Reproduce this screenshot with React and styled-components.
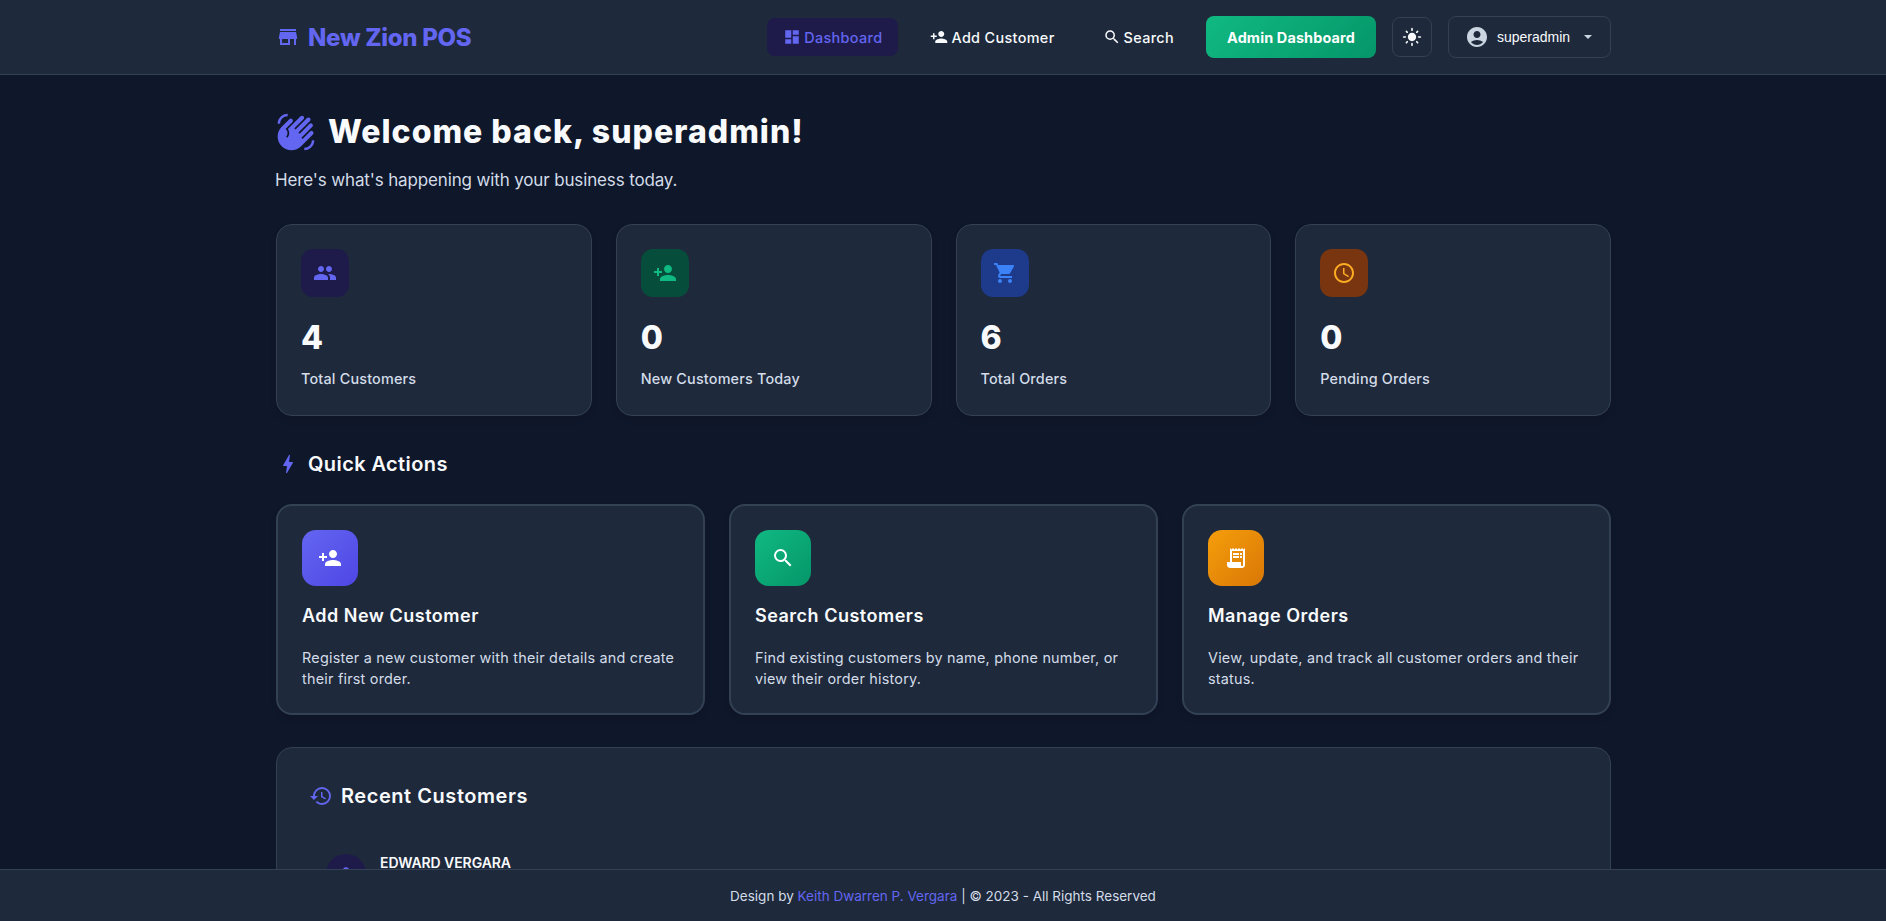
import styled, { createGlobalStyle } from "styled-components";
import {
  MdStore,
  MdDashboard,
  MdPersonAdd,
  MdSearch,
  MdLightMode,
  MdAccountCircle,
  MdWavingHand,
  MdPeople,
  MdShoppingCart,
  MdAccessTime,
  MdBolt,
  MdReceiptLong,
  MdHistory,
  MdPerson,
  MdChevronRight,
} from "react-icons/md";

const stats = [
  { icon: <MdPeople />, value: "4", label: "Total Customers", bg: "#1e1b4b", color: "#6366f1" },
  { icon: <MdPersonAdd />, value: "0", label: "New Customers Today", bg: "#064e3b", color: "#10b981" },
  { icon: <MdShoppingCart />, value: "6", label: "Total Orders", bg: "#1e3a8a", color: "#3b82f6" },
  { icon: <MdAccessTime />, value: "0", label: "Pending Orders", bg: "#78350f", color: "#fbab24" },
];

const actions = [
  {
    icon: <MdPersonAdd />,
    title: "Add New Customer",
    text: "Register a new customer with their details and create their first order.",
    from: "#6366f1",
    to: "#4f46e5",
  },
  {
    icon: <MdSearch />,
    title: "Search Customers",
    text: "Find existing customers by name, phone number, or view their order history.",
    from: "#10b981",
    to: "#059669",
  },
  {
    icon: <MdReceiptLong />,
    title: "Manage Orders",
    text: "View, update, and track all customer orders and their status.",
    from: "#f59e0b",
    to: "#d97706",
  },
];

const App = () => {
  return (
    <>
      <GlobalStyle />
      <Page>
        <Navbar>
          <NavInner>
            <Brand>
              <MdStore />
              New Zion POS
            </Brand>
            <NavLinks>
              <NavLink $active>
                <MdDashboard />
                Dashboard
              </NavLink>
              <NavLink>
                <MdPersonAdd />
                Add Customer
              </NavLink>
              <NavLink>
                <MdSearch />
                Search
              </NavLink>
              <AdminButton>Admin Dashboard</AdminButton>
              <ThemeButton>
                <MdLightMode />
              </ThemeButton>
              <UserButton>
                <MdAccountCircle />
                <span>superadmin</span>
                <Caret />
              </UserButton>
            </NavLinks>
          </NavInner>
        </Navbar>

        <Main>
          <Container>
            <Welcome>
              <MdWavingHand />
              Welcome back, superadmin!
            </Welcome>
            <Subtitle>Here's what's happening with your business today.</Subtitle>

            <StatsGrid>
              {stats.map((s) => (
                <StatCard key={s.label}>
                  <StatIcon $bg={s.bg} $color={s.color}>
                    {s.icon}
                  </StatIcon>
                  <StatValue>{s.value}</StatValue>
                  <StatLabel>{s.label}</StatLabel>
                </StatCard>
              ))}
            </StatsGrid>

            <SectionTitle>
              <MdBolt />
              Quick Actions
            </SectionTitle>
            <ActionsGrid>
              {actions.map((a) => (
                <ActionCard key={a.title}>
                  <ActionIcon $from={a.from} $to={a.to}>
                    {a.icon}
                  </ActionIcon>
                  <ActionTitle>{a.title}</ActionTitle>
                  <ActionText>{a.text}</ActionText>
                </ActionCard>
              ))}
            </ActionsGrid>

            <RecentCard>
              <RecentTitle>
                <MdHistory />
                Recent Customers
              </RecentTitle>
              <CustomerRow>
                <Avatar>
                  <MdPerson />
                </Avatar>
                <CustomerName>EDWARD VERGARA</CustomerName>
                <RowArrow>
                  <MdChevronRight />
                </RowArrow>
              </CustomerRow>
            </RecentCard>
          </Container>
        </Main>

        <Footer>
          Design by&nbsp;<FooterLink>Keith Dwarren P. Vergara</FooterLink>&nbsp;| © 2023 - All Rights Reserved
        </Footer>
      </Page>
    </>
  );
};

export default App;

const GlobalStyle = createGlobalStyle`
  * {
    box-sizing: border-box;
  }
  html, body {
    margin: 0;
    padding: 0;
    background: #0f172a;
  }
  body {
    font-family: Inter, "Noto Sans", "Liberation Sans", sans-serif;
    color: #f8fafc;
  }
`;

const Page = styled.div`
  display: flex;
  flex-direction: column;
  height: 100vh;
  overflow: hidden;
  background: #0f172a;
`;

const Navbar = styled.header`
  flex: none;
  height: 75px;
  background: #1e293b;
  border-bottom: 1px solid #334155;
`;

const NavInner = styled.div`
  display: flex;
  align-items: center;
  justify-content: space-between;
  max-width: 1400px;
  height: 100%;
  margin: 0 auto;
  padding: 0 32px 0 33px;
`;

const Brand = styled.div`
  display: flex;
  align-items: center;
  gap: 8px;
  font-size: 24px;
  font-weight: 800;
  letter-spacing: -0.3px;
  color: #6366f1;
  svg {
    width: 24px;
    height: 24px;
  }
`;

const NavLinks = styled.nav`
  display: flex;
  align-items: center;
  gap: 16px;
`;

const NavLink = styled.a`
  display: flex;
  align-items: center;
  gap: 3px;
  height: 38px;
  padding: 0 16px;
  border-radius: 8px;
  font-size: 14.4px;
  font-weight: 500;
  letter-spacing: 0.35px;
  color: ${(p) => (p.$active ? "#6366f1" : "#f8fafc")};
  background: ${(p) => (p.$active ? "#1e1b4b" : "transparent")};
  svg {
    width: 18px;
    height: 18px;
  }
`;

const AdminButton = styled.button`
  height: 42px;
  width: 170px;
  padding: 0;
  border: none;
  border-radius: 8px;
  background: linear-gradient(135deg, #10b981, #059669);
  color: #fff;
  font-family: inherit;
  font-size: 14.4px;
  font-weight: 700;
  letter-spacing: 0.15px;
`;

const ThemeButton = styled.button`
  display: flex;
  align-items: center;
  justify-content: center;
  width: 40px;
  height: 40px;
  padding: 0;
  border: 1px solid #334155;
  border-radius: 8px;
  background: transparent;
  color: #f8fafc;
  svg {
    width: 20px;
    height: 20px;
  }
`;

const UserButton = styled.button`
  display: flex;
  align-items: center;
  gap: 8px;
  width: 163px;
  height: 42px;
  padding: 0 16px;
  border: 1px solid #334155;
  border-radius: 8px;
  background: transparent;
  color: #f8fafc;
  font-family: "Liberation Sans", Arial, sans-serif;
  font-size: 14px;
  svg {
    width: 24px;
    height: 24px;
    color: #cbd5e1;
  }
`;

const Caret = styled.i`
  margin-left: 6px;
  border-top: 4px solid #cbd5e1;
  border-left: 4px solid transparent;
  border-right: 4px solid transparent;
`;

const Main = styled.main`
  flex: 1;
  min-height: 0;
  overflow: hidden;
`;

const Container = styled.div`
  max-width: 1400px;
  margin: 0 auto;
  padding: 33px 32px 0 33px;
`;

const Welcome = styled.h1`
  display: flex;
  align-items: center;
  gap: 12px;
  margin: 0 0 11px;
  font-size: 32px;
  font-weight: 800;
  line-height: 48px;
  letter-spacing: 1px;
  color: #f8fafc;
  svg {
    flex: none;
    width: 40px;
    height: 40px;
    color: #6366f1;
  }
`;

const Subtitle = styled.p`
  margin: 0 0 31px -1px;
  font-size: 17px;
  line-height: 26px;
  letter-spacing: -0.14px;
  color: #d3dce8;
`;

const StatsGrid = styled.div`
  display: grid;
  grid-template-columns: repeat(4, 1fr);
  gap: 24px;
  margin-bottom: 32px;
`;

const StatCard = styled.div`
  height: 192px;
  padding: 24px;
  background: #1e293b;
  border: 1px solid #334155;
  border-radius: 16px;
  box-shadow: 0 4px 6px rgba(0, 0, 0, 0.1);
`;

const StatIcon = styled.div`
  display: flex;
  align-items: center;
  justify-content: center;
  width: 48px;
  height: 48px;
  border-radius: 12px;
  background: ${(p) => p.$bg};
  color: ${(p) => p.$color};
  svg {
    width: 24px;
    height: 24px;
  }
`;

const StatValue = styled.div`
  margin-top: 17px;
  font-size: 32px;
  font-weight: 800;
  line-height: 48px;
  color: #f8fafc;
`;

const StatLabel = styled.div`
  margin-top: 6px;
  font-size: 14.4px;
  font-weight: 500;
  line-height: 22px;
  letter-spacing: 0.18px;
  color: #d3dce8;
`;

const SectionTitle = styled.h2`
  display: flex;
  align-items: center;
  gap: 8px;
  margin: 0 0 24px;
  font-size: 20px;
  font-weight: 600;
  line-height: 32px;
  letter-spacing: 0.4px;
  color: #f8fafc;
  svg {
    width: 24px;
    height: 24px;
    color: #6366f1;
  }
`;

const ActionsGrid = styled.div`
  display: grid;
  grid-template-columns: repeat(3, 1fr);
  gap: 24px;
  margin-bottom: 32px;
`;

const ActionCard = styled.div`
  height: 211px;
  padding: 24px;
  background: #1e293b;
  border: 2px solid #334155;
  border-radius: 16px;
  box-shadow: 0 4px 6px rgba(0, 0, 0, 0.1);
`;

const ActionIcon = styled.div`
  display: flex;
  align-items: center;
  justify-content: center;
  width: 56px;
  height: 56px;
  border-radius: 14px;
  background: linear-gradient(135deg, ${(p) => p.$from}, ${(p) => p.$to});
  color: #fff;
  svg {
    width: 24px;
    height: 24px;
  }
`;

const ActionTitle = styled.h3`
  margin: 17px 0 0;
  font-size: 18px;
  font-weight: 600;
  line-height: 26px;
  letter-spacing: 0.5px;
  color: #f8fafc;
`;

const ActionText = styled.p`
  margin: 18px 0 0;
  font-size: 14.4px;
  line-height: 21px;
  letter-spacing: 0.22px;
  color: #d3dce8;
`;

const RecentCard = styled.section`
  padding: 32px;
  background: #1e293b;
  border: 1px solid #334155;
  border-radius: 16px;
`;

const RecentTitle = styled.h2`
  display: flex;
  align-items: center;
  gap: 8px;
  margin: 0 0 40px;
  font-size: 20px;
  font-weight: 600;
  line-height: 32px;
  letter-spacing: 0.55px;
  color: #f8fafc;
  svg {
    width: 24px;
    height: 24px;
    color: #6366f1;
  }
`;

const CustomerRow = styled.div`
  display: flex;
  align-items: center;
  gap: 14px;
  min-height: 44px;
  padding: 0 16px 0 17px;
`;

const Avatar = styled.div`
  flex: none;
  display: flex;
  align-items: center;
  justify-content: center;
  width: 40px;
  height: 40px;
  border-radius: 50%;
  background: #1e1b4b;
  color: #6366f1;
  svg {
    width: 20px;
    height: 20px;
  }
`;

const CustomerName = styled.div`
  align-self: flex-start;
  margin-top: 5px;
  font-size: 14px;
  font-weight: 600;
  line-height: 12px;
  letter-spacing: -0.08px;
  color: #f8fafc;
`;

const RowArrow = styled.div`
  margin-left: auto;
  margin-right: 22px;
  color: #6366f1;
  svg {
    display: block;
    width: 20px;
    height: 20px;
  }
`;

const Footer = styled.footer`
  flex: none;
  display: flex;
  align-items: center;
  justify-content: center;
  height: 52px;
  background: #1e293b;
  border-top: 1px solid #334155;
  font-size: 13.5px;
  color: #d3dce8;
`;

const FooterLink = styled.a`
  color: #6366f1;
`;
